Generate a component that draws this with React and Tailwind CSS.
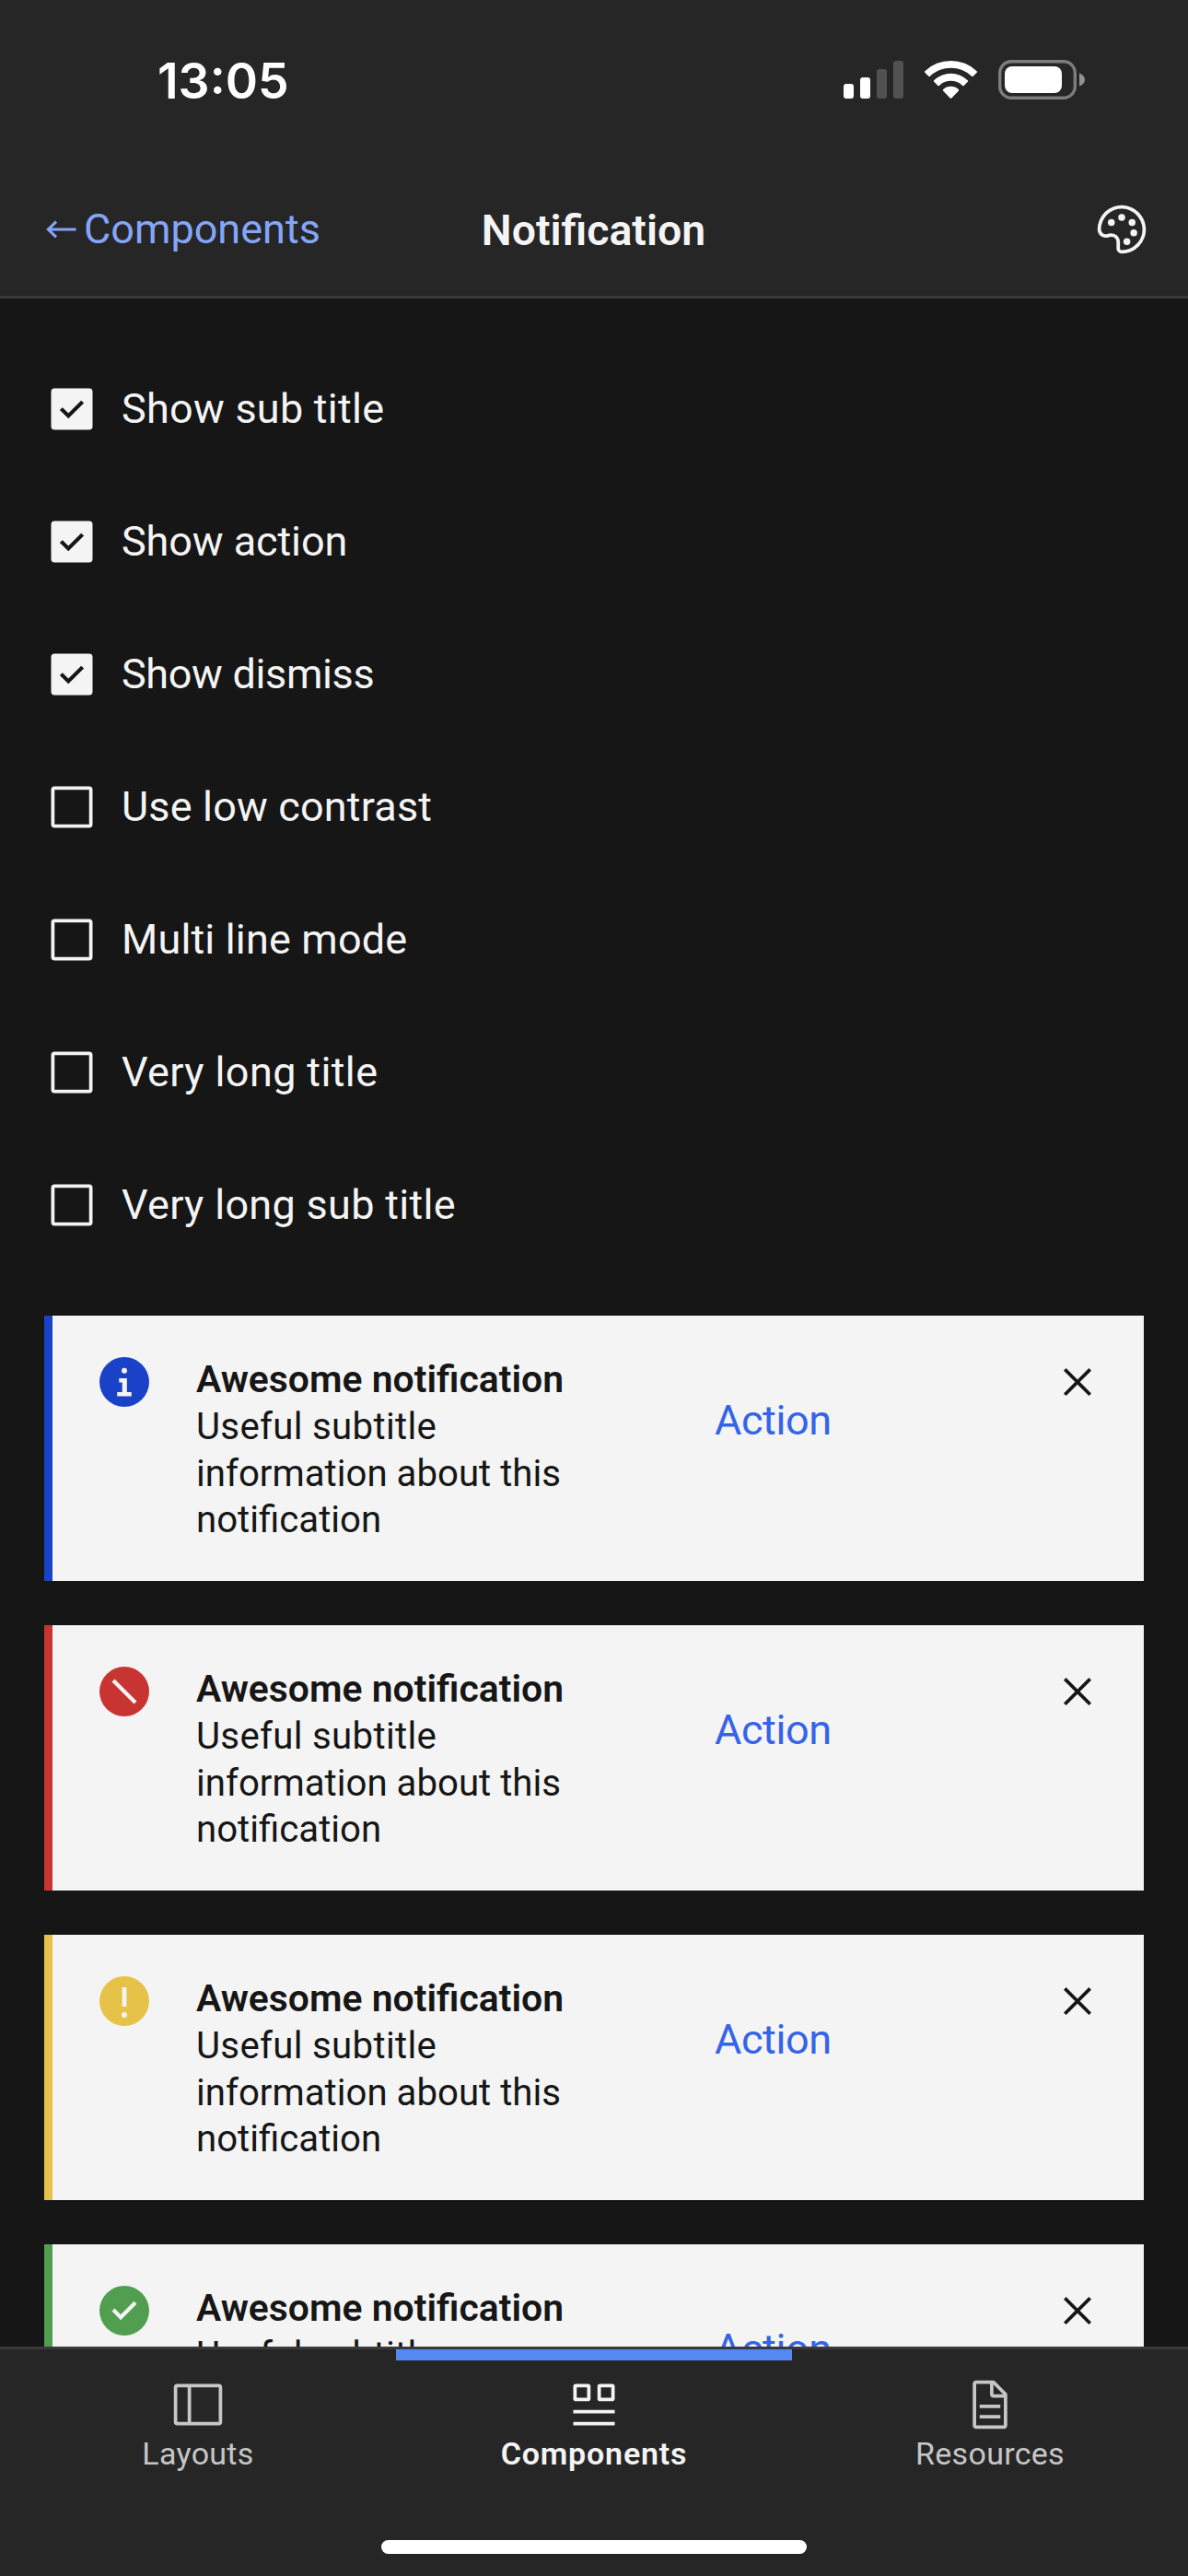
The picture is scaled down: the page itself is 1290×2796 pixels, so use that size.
const OPTIONS = [
  { label: "Show sub title", checked: true, tracking: "tracking-[0.25px]" },
  { label: "Show action", checked: true, tracking: "tracking-[-0.1px]" },
  { label: "Show dismiss", checked: true, tracking: "tracking-[-0.35px]" },
  { label: "Use low contrast", checked: false, tracking: "tracking-[0.16px]" },
  { label: "Multi line mode", checked: false, tracking: "tracking-[0.15px]" },
  { label: "Very long title", checked: false, tracking: "tracking-[0.38px]" },
  { label: "Very long sub title", checked: false, tracking: "tracking-[0.3px]" },
];

const NOTIFICATIONS = [
  { kind: "info", bar: "bg-[#1a42c8]", icon: "text-[#1a42c8]" },
  { kind: "error", bar: "bg-[#c83432]", icon: "text-[#c83432]" },
  { kind: "warning", bar: "bg-[#e7c248]", icon: "text-[#e7c248]" },
  { kind: "success", bar: "bg-[#519e50]", icon: "text-[#519e50]" },
];

const GLYPHS = {
  info: (
    <>
      <circle cx="10" cy="5.9" r="1" />
      <path d="M8.1 8.65h2.85v5.05h1.65v1.5H7.4v-1.5h1.85v-3.55H8.1z" />
    </>
  ),
  error: <path d="M13.5 14.5l-8-8 1-1 8 8z" />,
  warning: (
    <>
      <path d="M9.2 5h1.6v7H9.2z" />
      <circle cx="10" cy="15" r="1" />
    </>
  ),
  success: <path d="M8.7 13.4L5.5 10.2l1-1 2.2 2.2 4.8-4.8 1 1z" />,
};

const Icon = ({ children, className = "", size = 32 }) => (
  <svg viewBox={`0 0 ${size} ${size}`} className={`size-[60px] shrink-0 fill-current ${className}`} aria-hidden="true">
    {children}
  </svg>
);

function StatusBar() {
  return (
    <div className="flex h-[177px] items-start justify-between pl-[171px] pr-[112px]">
      <div className="mt-[48px] font-['Inter',sans-serif] text-[53.5px] font-semibold leading-[80px] text-white">13:05</div>
      <svg viewBox="0 0 262 44" className="mt-[65px] h-[44px] w-[262px]" aria-hidden="true">
        <rect x="0" y="26" width="11" height="16" rx="3" fill="#fff" />
        <rect x="18" y="19" width="11" height="23" rx="3" fill="#fff" />
        <rect x="36" y="10" width="11" height="32" rx="3" fill="#515151" />
        <rect x="54" y="1" width="11" height="41" rx="3" fill="#515151" />
        <g fill="#fff">
          <path d="M88.3 12.2Q87.5 13 88.3 13.8L92.3 17.8Q93.1 18.6 93.9 17.8A32.5 32.5 0 0 1 139.1 17.8Q139.9 18.6 140.7 17.8L144.7 13.8Q145.5 13 144.7 12.2A41 41 0 0 0 88.3 12.2z" />
          <path d="M98.2 22.2Q97.4 23 98.2 23.8L102.3 27.9Q103.1 28.7 103.9 27.9A18 18 0 0 1 129.1 27.9Q129.9 28.7 130.7 27.9L134.8 23.8Q135.6 23 134.8 22.2A26 26 0 0 0 98.2 22.2z" />
          <path d="M108.2 32.1Q107.4 33 108.2 33.8L115.7 41.4Q116.5 42.2 117.3 41.4L124.8 33.8Q125.6 33 124.8 32.1A12 12 0 0 0 108.2 32.1z" />
        </g>
        <rect x="169.7" y="1.7" width="81.6" height="39.6" rx="12.5" fill="none" stroke="#7d7d7d" strokeWidth="3.4" />
        <rect x="175" y="7" width="62" height="29" rx="8" fill="#fff" />
        <path d="M256 14.5C260 16 262 18.5 262 21.5S260 27 256 28.5z" fill="#919191" />
      </svg>
    </div>
  );
}

function NavBar() {
  return (
    <div className="grid h-[144px] grid-cols-[1fr_auto_1fr] items-center pl-[50px] pr-[42px]">
      <a className="flex items-center text-[45px] leading-[60px] text-[#85a5f8]">
        <svg viewBox="0 0 33 20" className="mr-[8px] h-[20px] w-[33px]" fill="none" stroke="currentColor" strokeWidth="3.1" aria-hidden="true">
          <path d="M11 1.6L2.4 10l8.6 8.4M2.4 10H32.5" />
        </svg>
        Components
      </a>
      <h1 className="ml-[-9px] mt-px text-[46.4px] font-semibold leading-[60px] text-[#f4f4f4]">Notification</h1>
      <Icon className="justify-self-end text-[#f4f4f4]">
        <circle cx="10" cy="12" r="2" />
        <circle cx="16" cy="9" r="2" />
        <circle cx="22" cy="12" r="2" />
        <circle cx="23" cy="18" r="2" />
        <circle cx="19" cy="23" r="2" />
        <path d="M16.54,2A14,14,0,0,0,2,16a4.82,4.82,0,0,0,6.09,4.65l1.12-.31A3,3,0,0,1,13,23.24V27a3,3,0,0,0,3,3A14,14,0,0,0,30,15.46,14.05,14.05,0,0,0,16.54,2Zm8.11,22.31A11.93,11.93,0,0,1,16,28a1,1,0,0,1-1-1V23.24a5,5,0,0,0-5-5,5.07,5.07,0,0,0-1.33.18l-1.12.31A2.82,2.82,0,0,1,4,16,12,12,0,0,1,16.47,4,12.18,12.18,0,0,1,28,15.53,11.89,11.89,0,0,1,24.65,24.31Z" />
      </Icon>
    </div>
  );
}

function Checkbox({ label, checked, tracking }) {
  return (
    <label className="flex h-[144px] items-center gap-[24px] text-[#f4f4f4]">
      <Icon>
        {checked ? (
          <path d="M26,4H6A2,2,0,0,0,4,6V26a2,2,0,0,0,2,2H26a2,2,0,0,0,2-2V6A2,2,0,0,0,26,4ZM14,21.5,9,16.54,10.59,15,14,18.35,21.41,11,23,12.58Z" />
        ) : (
          <path d="M26,4H6A2,2,0,0,0,4,6V26a2,2,0,0,0,2,2H26a2,2,0,0,0,2-2V6A2,2,0,0,0,26,4ZM6,26V6H26V26Z" />
        )}
      </Icon>
      <span className={`text-[45px] leading-[60px] ${tracking}`}>{label}</span>
    </label>
  );
}

function Notification({ kind, bar, icon }) {
  return (
    <article className="flex h-[288px] shrink-0 items-start bg-[#f4f4f4] text-[#161616]">
      <div className={`w-[9px] self-stretch ${bar}`} />
      <Icon size={20} className={`ml-[48px] mt-[42px] ${icon}`}>
        <circle cx="10" cy="10" r="9" />
        <g fill="#f4f4f4">{GLYPHS[kind]}</g>
      </Icon>
      <div className="ml-[48px] mt-[44px] w-[450px] leading-[50.5px]">
        <h2 className="text-[40.9px] font-semibold">Awesome notification</h2>
        <p className="mt-[1.5px] text-[40.2px]">
          <span className="tracking-[0.3px]">Useful subtitle</span>
          <br />
          information about this
          <br />
          notification
        </p>
      </div>
      <button className="ml-[113px] mt-[84px] text-[45px] leading-[60px] tracking-[-0.4px] text-[#3563e9]">Action</button>
      <Icon className="ml-auto mr-[42px] mt-[42px]">
        <path d="M24 9.4L22.6 8 16 14.6 9.4 8 8 9.4 14.6 16 8 22.6 9.4 24 16 17.4 22.6 24 24 22.6 17.4 16z" />
      </Icon>
    </article>
  );
}

function Tab({ label, active, tracking, children }) {
  return (
    <div className={`flex flex-col items-center ${active ? "font-semibold text-[#f4f4f4]" : "text-[#c6c6c6]"}`}>
      <div className={`mb-[18px] h-[12px] w-full ${active ? "bg-[#5488f5]" : ""}`} />
      <Icon>{children}</Icon>
      <span className={`text-[34px] leading-[46px] ${tracking}`}>{label}</span>
    </div>
  );
}

function TabBar() {
  return (
    <nav className="h-[249px] shrink-0 border-t-[3px] border-[#393939] bg-[#262626]">
      <div className="grid h-[207px] grid-cols-3">
        <Tab label="Layouts" tracking="tracking-[0.3px]">
          <path d="M28,4H4A2,2,0,0,0,2,6V26a2,2,0,0,0,2,2H28a2,2,0,0,0,2-2V6A2,2,0,0,0,28,4ZM10,26H4V6h6ZM28,26H12V6H28Z" />
        </Tab>
        <Tab label="Components" active tracking="tracking-[0.8px]">
          <path d="M12.5 4h-7A1.5 1.5 0 0 0 4 5.5v7A1.5 1.5 0 0 0 5.5 14h7a1.5 1.5 0 0 0 1.5-1.5v-7A1.5 1.5 0 0 0 12.5 4zM12 12H6V6h6zM26.5 4h-7A1.5 1.5 0 0 0 18 5.5v7a1.5 1.5 0 0 0 1.5 1.5h7a1.5 1.5 0 0 0 1.5-1.5v-7A1.5 1.5 0 0 0 26.5 4zM26 12h-6V6h6zM4 19h24v2H4zM4 26h24v2H4z" />
        </Tab>
        <Tab label="Resources" tracking="tracking-[0.3px]">
          <path d="M25.7,9.3l-7-7C18.5,2.1,18.3,2,18,2H8C6.9,2,6,2.9,6,4v24c0,1.1,0.9,2,2,2h16c1.1,0,2-0.9,2-2V10C26,9.7,25.9,9.5,25.7,9.3z M18,4.4l5.6,5.6H18V4.4z M24,28H8V4h8v6c0,1.1,0.9,2,2,2h6V28z" />
          <path d="M10 22h12v2H10zM10 16h12v2H10z" />
        </Tab>
      </div>
      <div className="mx-auto h-[15px] w-[462px] rounded-full bg-white" />
    </nav>
  );
}

export default function App() {
  return (
    <div className="flex h-[2796px] w-[1290px] flex-col overflow-hidden bg-[#161616] font-['Roboto',sans-serif]">
      <header className="h-[324px] shrink-0 border-b-[3px] border-[#393939] bg-[#262626]">
        <StatusBar />
        <NavBar />
      </header>
      <main className="flex min-h-0 flex-1 flex-col overflow-hidden px-[48px] pt-[48px]">
        <section className="mb-[48px] shrink-0">
          {OPTIONS.map((option) => (
            <Checkbox key={option.label} {...option} />
          ))}
        </section>
        <section className="flex shrink-0 flex-col gap-[48px]">
          {NOTIFICATIONS.map((item) => (
            <Notification key={item.kind} {...item} />
          ))}
        </section>
      </main>
      <TabBar />
    </div>
  );
}
